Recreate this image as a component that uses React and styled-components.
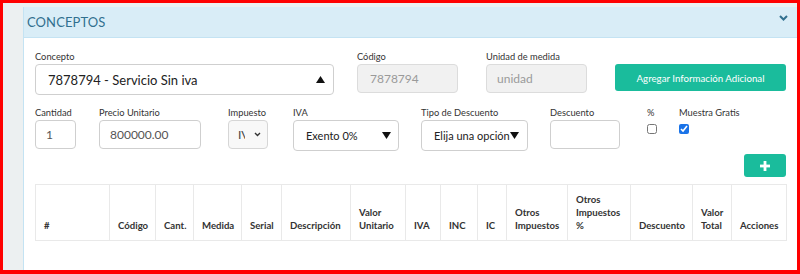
import React from "react";
import styled, { createGlobalStyle } from "styled-components";

const GlobalStyle = createGlobalStyle`
  body {
    margin: 0;
    font-family: Lato, "Open Sans", sans-serif;
    color: #333;
  }
  * {
    box-sizing: border-box;
  }
`;

const columns = [
  { label: "#", w: 74 },
  { label: "Código", w: 46 },
  { label: "Cant.", w: 38 },
  { label: "Medida", w: 48 },
  { label: "Serial", w: 40 },
  { label: "Descripción", w: 69 },
  { label: "Valor Unitario", w: 55 },
  { label: "IVA", w: 35 },
  { label: "INC", w: 37 },
  { label: "IC", w: 29 },
  { label: "Otros Impuestos", w: 61 },
  { label: "Otros Impuestos %", w: 63 },
  { label: "Descuento", w: 62 },
  { label: "Valor Total", w: 39 },
  { label: "Acciones", w: 55 },
];

const Caret = ({ up }) => (
  <svg width="9" height="7" viewBox="0 0 9 7">
    {up ? (
      <polygon points="0,7 9,7 4.5,0" fill="#111" />
    ) : (
      <polygon points="0,0 9,0 4.5,7" fill="#111" />
    )}
  </svg>
);

const App = () => {
  return (
    <>
      <GlobalStyle />
      <Frame>
        <Panel>
          <PanelHeader>
            <span>CONCEPTOS</span>
            <svg width="9" height="6" viewBox="0 0 9 6">
              <polyline
                points="1,1 4.5,4.5 8,1"
                fill="none"
                stroke="#31708f"
                strokeWidth="2"
              />
            </svg>
          </PanelHeader>

          <PanelBody>
            <Row>
              <Field $w={299} $mr={23}>
                <Label>Concepto</Label>
                <SelectBox $h={31} $pl={12} $fs={13}>
                  <span>7878794 - Servicio Sin iva</span>
                  <Caret up />
                </SelectBox>
              </Field>
              <Field $w={101} $mr={28}>
                <Label>Código</Label>
                <Input $h={29} $pl={12} $disabled>
                  7878794
                </Input>
              </Field>
              <Field $w={101} $mr={28}>
                <Label>Unidad de medida</Label>
                <Input $h={29} $pl={10} $disabled>
                  unidad
                </Input>
              </Field>
              <Field $w={171}>
                <Label>&nbsp;</Label>
                <GreenButton $h={27}>Agregar Información Adicional</GreenButton>
              </Field>
            </Row>

            <Row $mt={12}>
              <Field $w={41} $mr={23}>
                <Label>Cantidad</Label>
                <Input $h={29} $pl={10}>
                  1
                </Input>
              </Field>
              <Field $w={102} $mr={27}>
                <Label>Precio Unitario</Label>
                <Input $h={29} $pl={10}>
                  800000.00
                </Input>
              </Field>
              <Field $w={40} $mr={25}>
                <Label>Impuesto</Label>
                <NativeSelect>
                  <Clipped>IVA</Clipped>
                  <svg width="7" height="5" viewBox="0 0 7 5">
                    <polyline
                      points="1,1 3.5,3.5 6,1"
                      fill="none"
                      stroke="#333"
                      strokeWidth="1.4"
                    />
                  </svg>
                </NativeSelect>
              </Field>
              <Field $w={106} $mr={22}>
                <Label>IVA</Label>
                <SelectBox $h={31} $pl={12} $pr={7} $fs={11}>
                  <span>Exento 0%</span>
                  <Caret />
                </SelectBox>
              </Field>
              <Field $w={107} $mr={22}>
                <Label>Tipo de Descuento</Label>
                <SelectBox $h={31} $pl={12} $pr={8} $fs={11}>
                  <span>Elija una opción</span>
                  <Caret />
                </SelectBox>
              </Field>
              <Field $w={70} $mr={27}>
                <Label>Descuento</Label>
                <Input $h={29} $pl={10} />
              </Field>
              <Field $w={32}>
                <Label>%</Label>
                <Check type="checkbox" readOnly />
              </Field>
              <Field $w={80}>
                <Label>Muestra Gratis</Label>
                <Check type="checkbox" checked readOnly />
              </Field>
            </Row>

            <ActionRow>
              <PlusButton>
                <svg width="10" height="10" viewBox="0 0 10 10">
                  <rect x="3.6" y="0" width="2.8" height="10" fill="#fff" />
                  <rect x="0" y="3.6" width="10" height="2.8" fill="#fff" />
                </svg>
              </PlusButton>
            </ActionRow>

            <Table>
              <colgroup>
                {columns.map((c) => (
                  <col key={c.label} style={{ width: c.w }} />
                ))}
              </colgroup>
              <thead>
                <tr>
                  {columns.map((c) => (
                    <Th key={c.label}>{c.label}</Th>
                  ))}
                </tr>
              </thead>
            </Table>
          </PanelBody>
        </Panel>
      </Frame>
    </>
  );
};

const Frame = styled.div`
  width: 800px;
  height: 274px;
  border: 3px solid #ff0000;
  border-bottom-width: 4px;
  background: #ecf0f1;
  padding: 4px 0 0 20px;
  overflow: hidden;
`;

const Panel = styled.section`
  height: 100%;
  background: #fff;
  border-left: 1px solid #c4e3f3;
`;

const PanelHeader = styled.header`
  height: 31px;
  background: #d9edf7;
  border-bottom: 1px solid #c4e3f3;
  display: flex;
  align-items: center;
  justify-content: space-between;
  padding: 0 9px 0 3px;
  color: #31708f;
  font-size: 13px;
  letter-spacing: 0.1px;

  svg {
    margin-top: -8px;
  }
`;

const PanelBody = styled.div`
  padding: 13px 0 0 11px;
  width: 762px;
`;

const Row = styled.div`
  display: flex;
  align-items: flex-start;
  margin-top: ${(p) => p.$mt || 0}px;
`;

const Field = styled.div`
  flex: 0 0 ${(p) => p.$w}px;
  width: ${(p) => p.$w}px;
  margin-right: ${(p) => p.$mr || 0}px;
  display: flex;
  flex-direction: column;
  align-items: flex-start;
`;

const Label = styled.label`
  font-size: 9.3px;
  line-height: 12px;
  height: 12px;
  margin-bottom: 1px;
  color: #333;
  white-space: nowrap;
`;

const Input = styled.div`
  width: 100%;
  height: ${(p) => p.$h}px;
  border: 1px solid ${(p) => (p.$disabled ? "#dcdcdc" : "#cfcfcf")};
  border-radius: 4px;
  background: ${(p) => (p.$disabled ? "#f1f1f1" : "#fff")};
  color: ${(p) => (p.$disabled ? "#9a9a9a" : "#555")};
  padding-left: ${(p) => p.$pl}px;
  display: flex;
  align-items: center;
  font-size: 12px;
`;

const SelectBox = styled.div`
  width: 100%;
  height: ${(p) => p.$h}px;
  border: 1px solid #cfcfcf;
  border-radius: 4px;
  background: #fff;
  color: #222;
  padding: 0 ${(p) => p.$pr || 8}px 0 ${(p) => p.$pl}px;
  display: flex;
  align-items: center;
  justify-content: space-between;
  font-size: ${(p) => p.$fs}px;
  white-space: nowrap;
`;

const NativeSelect = styled.div`
  width: 100%;
  height: 29px;
  border: 1px solid #d6d6d6;
  border-radius: 4px;
  background: #f8f8f8;
  display: flex;
  align-items: center;
  padding: 0 6px 0 9px;
  justify-content: space-between;
  font-size: 12px;
  color: #444;
`;

const Clipped = styled.span`
  width: 7px;
  overflow: hidden;
  white-space: nowrap;
`;

const GreenButton = styled.button`
  width: 100%;
  height: ${(p) => p.$h}px;
  border: none;
  border-radius: 3px;
  background: #1abc9c;
  color: #fff;
  font-family: inherit;
  font-size: 9.7px;
  padding: 0;
`;

const Check = styled.input`
  width: 10px;
  height: 10px;
  margin: 4px 0 0 0;
  accent-color: #1a73e8;
`;

const ActionRow = styled.div`
  display: flex;
  justify-content: flex-end;
  margin-top: 3px;
`;

const PlusButton = styled.button`
  width: 42px;
  height: 23px;
  border: none;
  border-radius: 3px;
  background: #1abc9c;
  display: flex;
  align-items: center;
  justify-content: center;
  padding: 0;
`;

const Table = styled.table`
  margin-top: 7px;
  width: 751px;
  table-layout: fixed;
  border-collapse: collapse;
  border: 1px solid #e9e9e9;
`;

const Th = styled.th`
  border: 1px solid #e9e9e9;
  padding: 8px;
  height: 56px;
  vertical-align: bottom;
  text-align: left;
  font-size: 9.6px;
  line-height: 13px;
  font-weight: 700;
  color: #333;
`;

export default App;
